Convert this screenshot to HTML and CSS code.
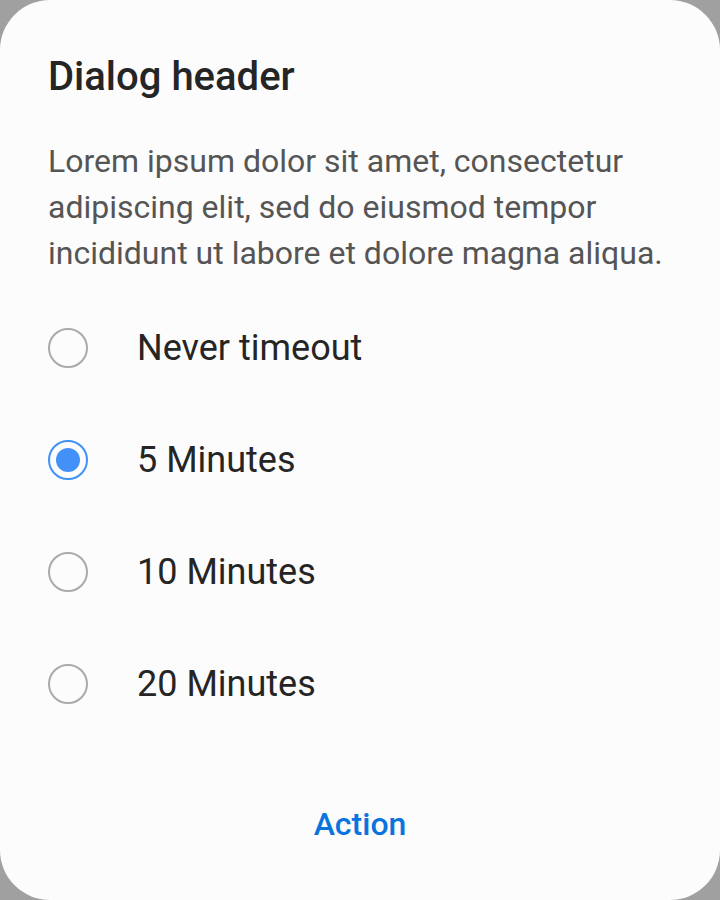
FILE: index.html
```html
<!DOCTYPE html>
<html>
<head>
<meta charset="utf-8">
<link rel="stylesheet" href="styles.css">
</head>
<body>
<div class="dialog">
  <h1 class="title">Dialog header</h1>
  <p class="body">Lorem ipsum dolor sit amet, consectetur adipiscing elit, sed do eiusmod tempor incididunt ut labore et dolore magna aliqua.</p>
  <div class="options">
    <label class="option"><span class="radio"></span><span class="label">Never timeout</span></label>
    <label class="option"><span class="radio checked"></span><span class="label">5 Minutes</span></label>
    <label class="option"><span class="radio"></span><span class="label">10 Minutes</span></label>
    <label class="option"><span class="radio"></span><span class="label">20 Minutes</span></label>
  </div>
  <div class="actions"><button class="action">Action</button></div>
</div>
</body>
</html>
```
FILE: styles.css
```css
html, body {
  margin: 0;
  padding: 0;
  background: #a0a0a0;
}
body {
  width: 720px;
  height: 900px;
  font-family: Roboto, "Noto Sans", sans-serif;
}
.dialog {
  box-sizing: border-box;
  width: 720px;
  height: 900px;
  background: #fcfcfc;
  border-radius: 50px;
  padding: 53px 48px 0 48px;
  display: flex;
  flex-direction: column;
}
.title {
  margin: 0;
  font-size: 40px;
  font-weight: 500;
  line-height: 48px;
  color: #252525;
}
.body {
  margin: 37px 0 0 0;
  font-size: 32px;
  line-height: 46px;
  color: #555555;
}
.options {
  margin-top: 16px;
  display: flex;
  flex-direction: column;
}
.option {
  height: 112px;
  display: flex;
  align-items: center;
  gap: 49px;
}
.radio {
  box-sizing: border-box;
  width: 40px;
  height: 40px;
  border-radius: 50%;
  border: 2px solid #aaaaaa;
  display: flex;
  align-items: center;
  justify-content: center;
  flex: none;
}
.radio.checked {
  border-color: #4191f8;
}
.radio.checked::after {
  content: "";
  width: 24px;
  height: 24px;
  border-radius: 50%;
  background: #4191f8;
}
.label {
  font-size: 36px;
  color: #252525;
}
.actions {
  margin-top: 65px;
  display: flex;
  justify-content: center;
}
.action {
  border: none;
  background: none;
  font-family: Roboto, sans-serif;
  font-size: 32px;
  font-weight: 500;
  line-height: normal;
  color: #0a74de;
  padding: 0;
}
```
